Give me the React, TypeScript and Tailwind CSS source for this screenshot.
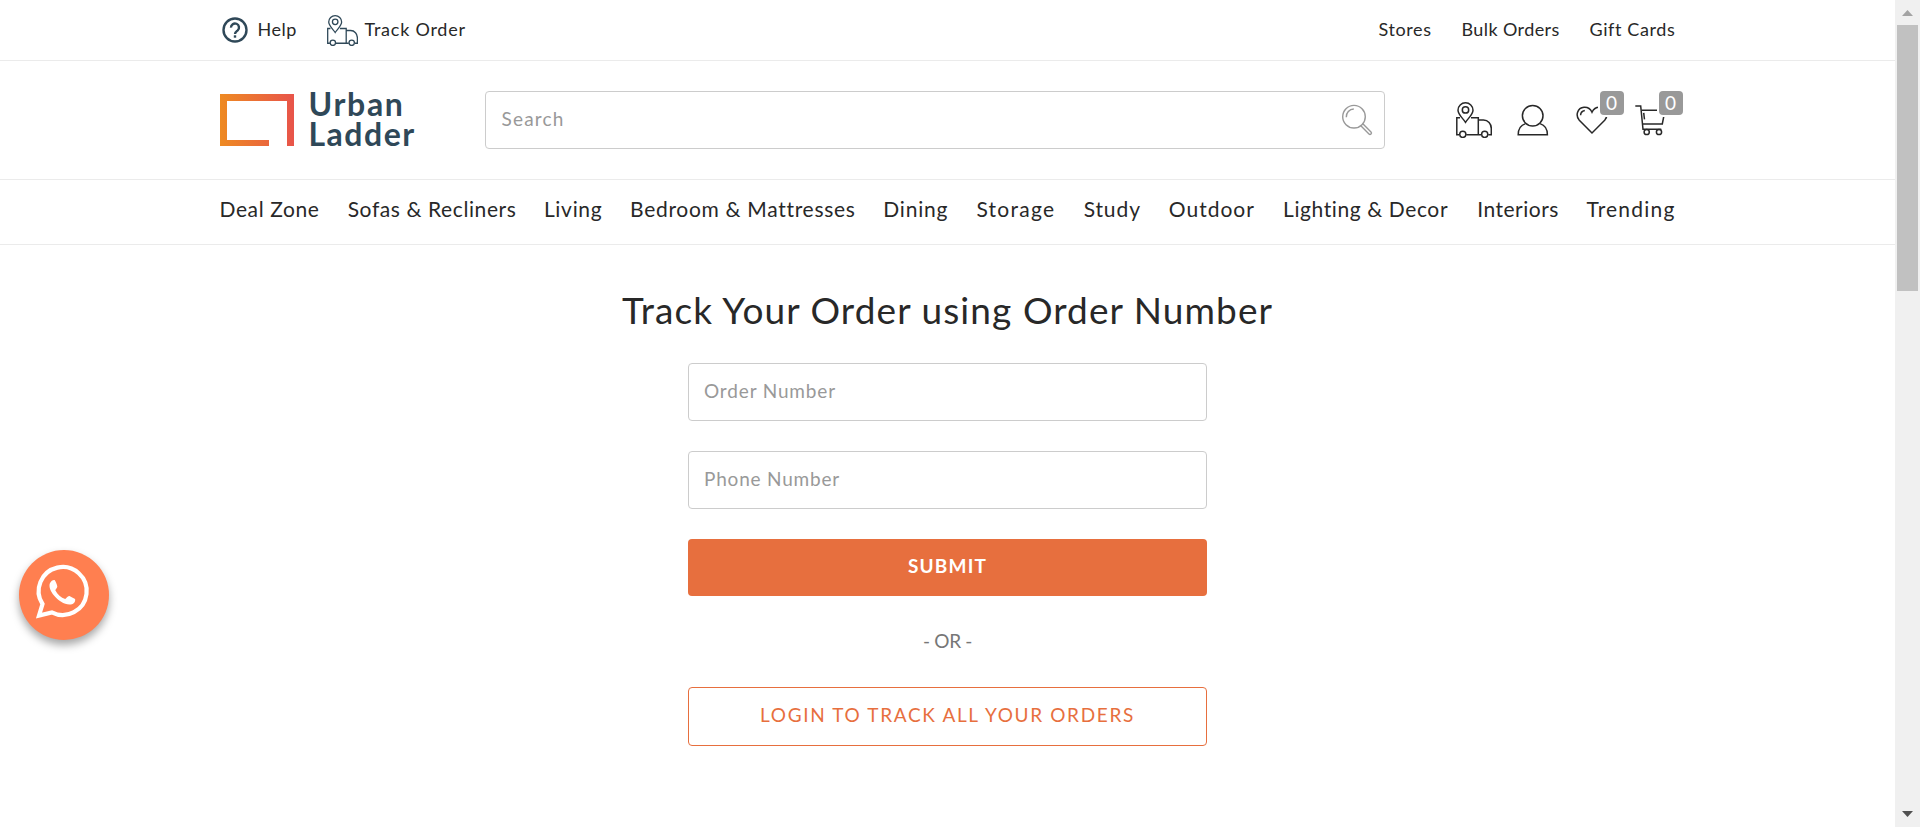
import type { ReactNode } from "react";

const navItems: { label: string; cls: string }[] = [
  { label: "Deal Zone", cls: "w-[100px] tracking-[0.600px]" },
  { label: "Sofas & Recliners", cls: "w-[168px] tracking-[0.6px]" },
  { label: "Living", cls: "w-[58px] tracking-[0.7px]" },
  { label: "Bedroom & Mattresses", cls: "w-[225px] tracking-[0.7px]" },
  { label: "Dining", cls: "w-[65px] tracking-[0.8px]" },
  { label: "Storage", cls: "w-[79px] tracking-[1.25px]" },
  { label: "Study", cls: "w-[57px] tracking-[0.9px]" },
  { label: "Outdoor", cls: "w-[86px] tracking-[1px]" },
  { label: "Lighting & Decor", cls: "w-[166px] tracking-[0.6px]" },
  { label: "Interiors", cls: "w-[81px] tracking-[0.5px]" },
  { label: "Trending", cls: "w-[89px] tracking-[1.2px]" },
];

function TruckIcon({ className }: { className: string }) {
  return (
    <svg viewBox="0 0 36 36" fill="none" stroke="currentColor" strokeWidth="1.5" className={className}>
      <path d="M9.5 20.3C7.2 16.6 2 12.600 2 8.200a7.500 7.400 0 0 1 15 0C17 12.600 11.800 16.600 9.500 20.300Z" />
      <circle cx="9.5" cy="7.900" r="3.200" />
      <path d="M4 15.700H.8v17.100h2.600M15 15.700h7.300v17.100H10.200M22.300 18h5.200c4.500 0 7.800 4 7.800 8.500v6.300h-3.100M22.300 32.800h3" />
      <circle cx="6.800" cy="32.300" r="3.100" />
      <circle cx="28.700" cy="32.300" r="3.100" />
    </svg>
  );
}

function HelpIcon() {
  return (
    <svg viewBox="0 0 26 26" fill="none" stroke="currentColor" className="h-[26px] w-[26px]">
      <circle cx="13" cy="13" r="11.500" strokeWidth="2.400" />
      <path d="M9 10.600a4 4 0 1 1 6.700 2.800c-1.500 1.200-2.700 1.800-2.700 3.600" strokeWidth="2.400" />
      <path d="M11.800 18.300h2.400v2.400h-2.400z" fill="currentColor" stroke="none" />
    </svg>
  );
}

function SearchIcon() {
  return (
    <svg viewBox="0 0 32 32" fill="none" stroke="currentColor" strokeWidth="1.400" className="h-8 w-8">
      <circle cx="13" cy="12.700" r="11.300" />
      <path d="M5.300 13.200a7.700 7.700 0 0 1 7.500-8.200" />
      <path d="M19.800 21.800l8.200 8.200a1.300 1.300 0 0 0 2-2l-8.200-8.200" />
    </svg>
  );
}

function UserIcon() {
  return (
    <svg viewBox="0 0 32 32" fill="none" stroke="currentColor" strokeWidth="1.500" className="h-8 w-8">
      <circle cx="15.700" cy="11.800" r="10.300" />
      <path d="M8.600 19.600C4 21 1.200 25.500 1.200 30.800h29.200c0-5.300-2.800-9.800-7.400-11.200" />
    </svg>
  );
}

function HeartIcon() {
  return (
    <svg viewBox="0 0 32 32" fill="none" stroke="currentColor" strokeWidth="1.500" className="h-8 w-8">
      <path d="M16 29L3.300 16.200C-.8 11.500 1.300 3.800 8 3.200c3.800-.300 6.500 1.700 8 5 1.500-3.300 4.200-5.300 8-5 6.700.600 8.800 8.300 4.700 13L16 29Z" />
      <path d="M4.600 11.300c0-2.600 1.600-4.400 4.200-4.900" />
    </svg>
  );
}

function CartIcon() {
  return (
    <svg viewBox="0 0 32 32" fill="none" stroke="currentColor" strokeWidth="1.500" className="h-8 w-8">
      <path d="M.3 2H5.700L8 25.300h18.300" />
      <path d="M6.500 6.200H30L27.300 19.900H7.600" />
      <path d="M8.700 8.800l.8 6.500" />
      <circle cx="11.700" cy="28" r="2.600" />
      <circle cx="24" cy="28" r="2.600" />
    </svg>
  );
}

function Badge({ children }: { children: ReactNode }) {
  return (
    <span className="absolute -top-[13px] left-[24px] flex h-6 w-6 items-center justify-center rounded bg-[#999] pb-[2px] text-[19px] leading-none text-white ring-2 ring-white">
      {children}
    </span>
  );
}

function Field({ label, cls }: { label: string; cls: string }) {
  return (
    <input
      type="text"
      placeholder={label}
      className={`h-[58px] w-full rounded border border-[#ccc] px-[15px] pb-[3px] text-[19px] text-[#282828] outline-none placeholder:text-[#999] ${cls}`}
    />
  );
}

function Logo() {
  return (
    <div className="flex items-start gap-[15px] pt-[3px] text-[#2f4858]">
      <svg viewBox="0 0 74 52" className="h-[52px] w-[74px]">
        <defs>
          <linearGradient id="frame" x1="0" x2="1" y1="0" y2="0">
            <stop offset="0" stopColor="#ee8a22" />
            <stop offset="1" stopColor="#e8544a" />
          </linearGradient>
        </defs>
        <path d="M0 0H74V52H67V7H7V46H49V52H0Z" fill="url(#frame)" />
      </svg>
      <div className="-mt-[5px] text-[32px] leading-[30px] font-bold">
        <div className="tracking-[1.700px]">Urban</div>
        <div className="tracking-[1.500px]">Ladder</div>
      </div>
    </div>
  );
}

function ScrollBar() {
  return (
    <div className="flex h-full w-[25px] shrink-0 flex-col items-center bg-[#f0f0f0] pt-[10px] pb-[10px]">
      <svg viewBox="0 0 11 6" className="h-[6px] w-[11px] text-[#a3a3a3]">
        <path d="M5.500 0L11 6H0Z" fill="currentColor" />
      </svg>
      <div className="mt-[9px] h-[266px] w-[21px] bg-[#c1c1c1]" />
      <svg viewBox="0 0 11 6" className="mt-auto h-[6px] w-[11px] text-[#505050]">
        <path d="M0 0H11L5.500 6Z" fill="currentColor" />
      </svg>
    </div>
  );
}

export default function App() {
  return (
    <div className="flex h-[827px] overflow-hidden bg-white font-['Lato',sans-serif] text-[#282828]">
      <div className="min-w-0 flex-1">
        <div className="border-b border-[#ebebeb]">
          <div className="mx-auto flex h-[60px] w-[1456px] items-center justify-between text-lg">
            <div className="flex items-center">
              <a className="flex items-center pl-[2px]">
                <span className="text-[#2f4858]"><HelpIcon /></span>
                <span className="ml-[10px] w-[41px] pb-[2px] tracking-[0.500px]">Help</span>
              </a>
              <a className="ml-[28px] flex items-center">
                <TruckIcon className="h-[31px] w-[31px] text-[#2f4858]" />
                <span className="ml-[7px] pb-[2px] tracking-[0.760px]">Track Order</span>
              </a>
            </div>
            <div className="flex items-center gap-[30px] pb-[2px] whitespace-nowrap">
              <a className="w-[53px] tracking-[0.600px]">Stores</a>
              <a className="w-[98px] tracking-[0.400px]">Bulk Orders</a>
              <a className="w-[86px] tracking-[0.600px]">Gift Cards</a>
            </div>
          </div>
        </div>

        <div className="border-b border-[#ebebeb]">
          <div className="mx-auto flex h-[118px] w-[1456px] items-center">
            <div className="w-[265px]"><Logo /></div>
            <div className="flex h-[58px] w-[900px] items-center rounded border border-[#ccc] pr-[11px] pl-4 text-[#999]">
              <input
                type="text"
                placeholder="Search"
                className="min-w-0 flex-1 pb-[2px] text-[19px] tracking-[1.200px] text-[#282828] outline-none placeholder:text-[#999]"
              />
              <SearchIcon />
            </div>
            <div className="flex flex-1 items-center pl-[71px]">
              <TruckIcon className="h-9 w-9" />
              <span className="ml-[25px]"><UserIcon /></span>
              <span className="relative ml-[27px]"><HeartIcon /><Badge>0</Badge></span>
              <span className="relative ml-[27px]"><CartIcon /><Badge>0</Badge></span>
            </div>
          </div>
        </div>

        <nav className="border-b border-[#ebebeb]">
          <div className="mx-auto flex h-16 w-[1456px] items-center justify-between pb-[6px] text-[21px] whitespace-nowrap">
            {navItems.map((n) => (
              <a key={n.label} className={n.cls}>{n.label}</a>
            ))}
          </div>
        </nav>

        <main className="mx-auto flex w-[519px] flex-col items-center pt-10">
          <h1 className="text-[37px] leading-[50px] tracking-[1.090px] whitespace-nowrap">
            Track Your Order using Order Number
          </h1>
          <div className="mt-7 flex w-full flex-col gap-[30px]">
            <Field label="Order Number" cls="tracking-[0.850px]" />
            <Field label="Phone Number" cls="tracking-[0.800px]" />
            <button className="h-[57px] w-full rounded bg-[#e76f3e] pb-[2px] text-[19px] font-bold tracking-[1.200px] text-white">
              SUBMIT
            </button>
          </div>
          <div className="flex h-[91px] items-center text-[19px] tracking-[-0.300px] text-[#777]">- OR -</div>
          <button className="h-[59px] w-full rounded border border-[#e76f3e] pb-[2px] text-[19px] tracking-[1.650px] text-[#e76f3e]">
            LOGIN TO TRACK ALL YOUR ORDERS
          </button>
        </main>
      </div>

      <ScrollBar />

      <button className="absolute top-[550px] left-[19px] flex h-[90px] w-[90px] items-center justify-center rounded-full bg-[#ff7f50] shadow-[0_5px_8px_rgba(0,0,0,0.35)]">
        <svg viewBox="0 0 90 90" className="h-[90px] w-[90px]">
          <path
            d="M20 65.500L23.500 54A24 24 0 1 1 32.800 62.400Z"
            fill="none"
            stroke="white"
            strokeWidth="4.200"
            strokeLinejoin="miter"
          />
          <path
            d="M30.800 33.500c1.300-2.700 3.500-3.800 5-3.300 1.200 1.800 2.300 4.500 2.500 6.200 0 1.600-1.700 2.700-2 3.800 2.200 4.300 5.700 7.300 9.900 8.800 1.300-.500 2.400-3.200 4.200-2.900l5.700 2.900c.6 3.200-1.900 5.600-5.600 5.600-5.500-.200-11.500-4-15.500-9-3.500-4.400-5.200-8.600-4.200-12.100Z"
            fill="white"
          />
        </svg>
      </button>
    </div>
  );
}
